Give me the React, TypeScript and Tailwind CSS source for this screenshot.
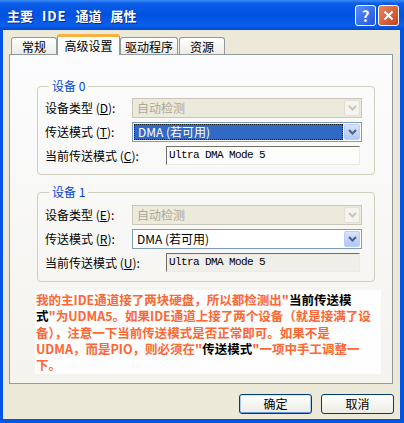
import React from "react";

// XP style "主要 IDE 通道 属性" dialog, advanced settings tab

function Chevron({ color }: { color: string }) {
  return (
    <svg width="9" height="6" viewBox="0 0 9 6" fill="none">
      <path d="M1 1l3.5 3.5L8 1" stroke={color} strokeWidth="2" />
    </svg>
  );
}

function Combo({ value, disabled, focused }: { value: string; disabled?: boolean; focused?: boolean }) {
  return (
    <div
      className={`flex h-[20px] w-[230px] border p-[1px] ${
        disabled ? "border-[#c9c7ba] bg-[#ebeadb]" : "border-[#7f9db9] bg-white"
      }`}
    >
      <div className="flex min-w-0 flex-1 pr-[1px]">
        <div
          className={`flex h-full w-full items-center pl-[3px] ${
            focused ? "border border-dotted border-[#1b1b1b] bg-[#316ac5] text-white" : ""
          } ${disabled ? "text-[#aca899]" : ""}`}
        >
          {value}
        </div>
      </div>
      <div
        className={`flex w-[16px] items-center justify-center rounded-[2px] border ${
          disabled
            ? "border-[#e2e0d6] bg-[#f4f3ee]"
            : "border-[#b9cdf5] bg-linear-to-b from-[#d8e4fd] to-[#b2c6f5]"
        }`}
      >
        <Chevron color={disabled ? "#c9c7ba" : "#4d6185"} />
      </div>
    </div>
  );
}

function Field({ value, tinted }: { value: string; tinted?: boolean }) {
  return (
    <div
      className={`flex h-[19px] w-[194px] items-center border border-t-[#716f64] border-l-[#716f64] border-r-[#ecebe3] border-b-[#ecebe3] pl-[2px] font-['Liberation_Mono',monospace] text-[11px] tracking-[-0.6px] ${
        tinted ? "bg-[#efeee8]" : "bg-[#fdfdfb]"
      }`}
    >
      {value}
    </div>
  );
}

function Label({ text, k, w }: { text: string; k: string; w: string }) {
  return (
    <div className={`${w} shrink-0 whitespace-pre`}>
      {text} (<u>{k}</u>):
    </div>
  );
}

function Group({
  title,
  keys,
  focused,
  tinted,
  top,
}: {
  title: string;
  keys: [string, string, string];
  focused?: boolean;
  tinted?: boolean;
  top: string;
}) {
  return (
    <fieldset className="w-[338px] rounded-[4px] border border-[#d0d0bf] pl-[7px]">
      <legend className="ml-[4px] px-[3px] text-[12px] leading-[14px] text-[#0046d5]">{title}</legend>
      <div className={`flex flex-col gap-[4px] ${top} pb-[9px]`}>
        <div className="flex items-center">
          <Label text="设备类型" k={keys[0]} w="w-[87px]" />
          <Combo value="自动检测" disabled />
        </div>
        <div className="flex items-center">
          <Label text="传送模式" k={keys[1]} w="w-[87px]" />
          <Combo value="DMA (若可用)" focused={focused} />
        </div>
        <div className="flex items-center">
          <Label text="当前传送模式" k={keys[2]} w="w-[121px]" />
          <Field value="Ultra DMA Mode 5" tinted={tinted} />
        </div>
      </div>
    </fieldset>
  );
}

function Tab({ label, w, active, extra }: { label: string; w: string; active?: boolean; extra?: string }) {
  if (active) {
    return (
      <div
        className={`relative z-10 -mb-[1px] flex h-[21px] ${w} items-center justify-center rounded-t-[3px] border-x border-t-[3px] border-x-[#919b9c] border-t-[#f6b13d] bg-[#fcfcfe] pb-[1px] ${extra ?? ""}`}
      >
        {label}
      </div>
    );
  }
  return (
    <div
      className={`flex h-[17px] ${w} items-center justify-center rounded-t-[3px] border-x border-t border-[#919b9c] bg-linear-to-b from-white to-[#ecebe6] pt-[1px] ${extra ?? ""}`}
    >
      {label}
    </div>
  );
}

function Button({ label, def }: { label: string; def?: boolean }) {
  return (
    <div
      className={`flex h-[20px] w-[73px] items-center justify-center rounded-[3px] border border-[#003c74] bg-linear-to-b from-white to-[#ecebe4] text-[12px] ${
        def ? "shadow-[inset_0_1px_0_#cee7ff,inset_1px_0_0_#a9c9f5,inset_-1px_0_0_#a9c9f5,inset_0_-1px_0_#6b95e0]" : ""
      }`}
    >
      {label}
    </div>
  );
}

export default function App() {
  const o = "h-[16.3px] text-[#ff6633]";
  return (
    <div className="flex h-[423px] w-[404px] flex-col bg-[#0055e5] font-['Noto_Sans_CJK_SC',sans-serif] text-[12px] text-black">
      {/* title bar */}
      <div className="flex h-[30px] shrink-0 items-center bg-[linear-gradient(180deg,#3a8af5_0%,#0a5ce8_12%,#0052de_50%,#0a5fed_85%,#0049d0_100%)] pl-[7px] pr-[5px]">
        <div className="flex gap-[9px] pt-[1px] text-[13px] font-bold leading-none text-white [text-shadow:1px_1px_0_#0a2a90]">
          <span>主要</span>
          <span className="tracking-[1px]">IDE</span>
          <span>通道</span>
          <span>属性</span>
        </div>
        <div className="ml-auto flex gap-[2px]">
          <div className="flex h-[21px] w-[21px] items-center justify-center rounded-[3px] border border-white bg-linear-to-br from-[#5b8ff8] to-[#1f52dc] text-[15px] font-bold leading-none text-white">
            ?
          </div>
          <div className="flex h-[21px] w-[21px] items-center justify-center rounded-[3px] border border-white bg-linear-to-br from-[#ea8560] to-[#c8401c]">
            <svg width="11" height="11" viewBox="0 0 11 11">
              <path d="M1.5 1.5l8 8M9.5 1.5l-8 8" stroke="white" strokeWidth="2" />
            </svg>
          </div>
        </div>
      </div>

      {/* client area */}
      <div className="mb-[4px] ml-[3px] mr-[4px] flex flex-1 flex-col bg-[#ece9d8]">
        <div className="ml-[6px] flex w-[384px] flex-col">
          <div className="flex h-[24px] items-end pl-[2px]">
            <Tab label="常规" w="w-[46px]" />
            <Tab label="高级设置" w="w-[63px]" active />
            <Tab label="驱动程序" w="w-[58px]" />
            <Tab label="资源" w="w-[46px]" extra="ml-[1px]" />
          </div>
          <div className="flex h-[330px] flex-col border border-[#919b9c] bg-linear-to-b from-[#fcfcfe] to-[#f4f3ee] pl-[27px] pt-[24px]">
            <Group title="设备 0" keys={["D", "T", "C"]} focused top="pt-[5px]" />
            <div className="h-[10px]" />
            <Group title="设备 1" keys={["E", "R", "U"]} tinted top="pt-[6px]" />
            <div className="-ml-[2px] mt-[8px] flex h-[84px] w-[346px] flex-col bg-[#fefefe] pl-[1px] pt-[2px] text-[12.5px] font-bold leading-[16.3px] whitespace-nowrap">
              <div className={o}>
                我的主IDE通道接了两块硬盘，所以都检测出"<span className="text-black">当前传送模</span>
              </div>
              <div className={o}>
                <span className="text-black">式</span>"为UDMA5。如果IDE通道上接了两个设备（就是接满了设
              </div>
              <div className={o}>备），注意一下当前传送模式是否正常即可。如果不是</div>
              <div className={o}>
                UDMA，而是PIO，则必须在"<span className="text-black">传送模式</span>"一项中手工调整一
              </div>
              <div className={o}>下。</div>
            </div>
          </div>
        </div>
        <div className="flex justify-end gap-[9px] pr-[6px] pt-[10px]">
          <Button label="确定" def />
          <Button label="取消" />
        </div>
      </div>
    </div>
  );
}
